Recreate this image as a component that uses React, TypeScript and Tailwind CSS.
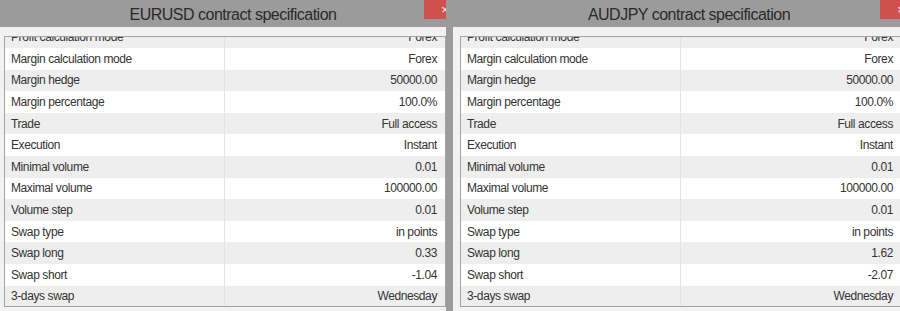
import React from "react";

type Spec = { label: string; value: string };

const base = (swapLong: string, swapShort: string): Spec[] => [
  { label: "Profit calculation mode", value: "Forex" },
  { label: "Margin calculation mode", value: "Forex" },
  { label: "Margin hedge", value: "50000.00" },
  { label: "Margin percentage", value: "100.0%" },
  { label: "Trade", value: "Full access" },
  { label: "Execution", value: "Instant" },
  { label: "Minimal volume", value: "0.01" },
  { label: "Maximal volume", value: "100000.00" },
  { label: "Volume step", value: "0.01" },
  { label: "Swap type", value: "in points" },
  { label: "Swap long", value: swapLong },
  { label: "Swap short", value: swapShort },
  { label: "3-days swap", value: "Wednesday" },
];

function SpecPanel({ symbol, rows }: { symbol: string; rows: Spec[] }) {
  return (
    <div className="w-[472px] flex flex-col h-full">
      <div className="relative h-[28px] bg-[#9b9b9b] flex items-center justify-center pt-[2px]">
        <span className="text-[16px] tracking-[-0.5px] text-[#2a2a2a]">{symbol} contract specification</span>
        <div className="absolute top-0 left-[427px] w-[42px] h-[19px] bg-[#d04f4f] flex items-center justify-center text-white text-[13px] leading-none">
          ×
        </div>
      </div>
      <div className="flex-1 bg-[#f2f2f2] pl-[7px] pt-[9px] pb-[4px]">
        <div className="w-[442px] h-[271px] border border-[#a3a3a3] overflow-hidden bg-white">
          <div className="-mt-[10.6px]">
            {rows.map((r, i) => (
              <div
                key={r.label}
                className={`flex h-[21.6px] items-center text-[12px] tracking-[-0.4px] text-[#333] ${
                  i % 2 === 0 ? "bg-[#eeeeee]" : "bg-white"
                }`}
              >
                <div className="w-[220px] h-full flex items-center pl-[6px] border-r border-[#e3e3e3]">
                  {r.label}
                </div>
                <div className="flex-1 h-full flex items-center justify-end pr-[8px]">{r.value}</div>
              </div>
            ))}
          </div>
        </div>
      </div>
    </div>
  );
}

export default function App() {
  return (
    <div
      className="w-[900px] h-[311px] bg-[#9b9b9b] flex gap-[7px] overflow-hidden"
      style={{ fontFamily: '"Liberation Sans", Arial, sans-serif' }}
    >
      <div className="w-[446px] h-full overflow-hidden">
        <div className="-ml-[3px] h-full">
          <SpecPanel symbol="EURUSD" rows={base("0.33", "-1.04")} />
        </div>
      </div>
      <div className="flex-1 h-full overflow-hidden">
        <SpecPanel symbol="AUDJPY" rows={base("1.62", "-2.07")} />
      </div>
    </div>
  );
}
